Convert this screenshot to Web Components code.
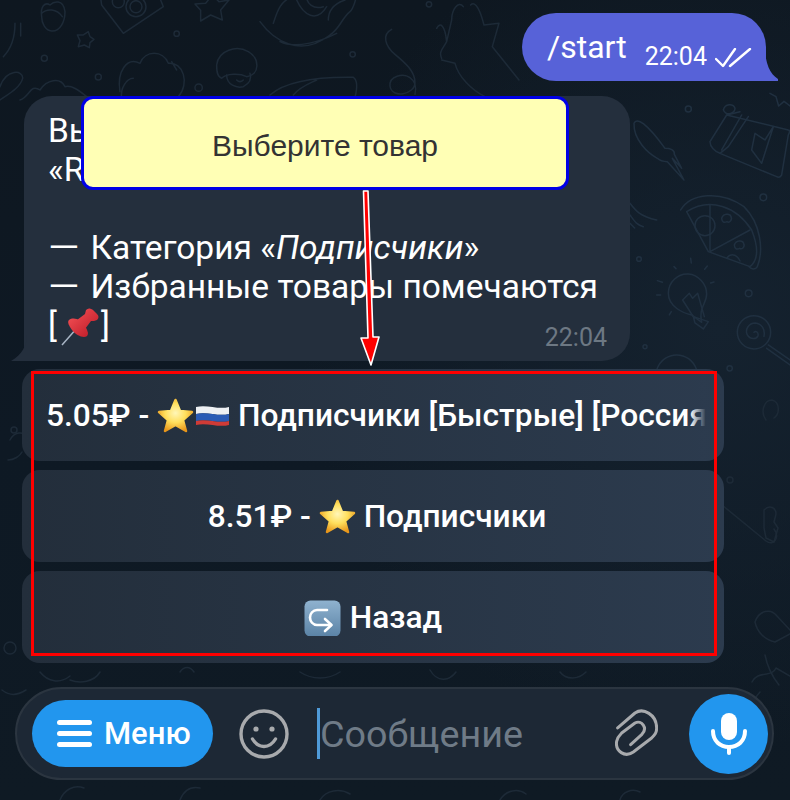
<!DOCTYPE html>
<html>
<head>
<meta charset="utf-8">
<style>
  html, body { margin: 0; padding: 0; background: #0e1822; }
  body { width: 790px; height: 800px; overflow: hidden; font-family: Roboto, "Liberation Sans", sans-serif; }
</style>
</head>
<body>
<tg-screen>
  <tg-outgoing time="22:04">/start</tg-outgoing>
  <tg-incoming time="22:04">Вы
«R

<span class="dash">—</span> Категория «<em>Подписчики</em>»
<span class="dash">—</span> Избранные товары помечаются
[<tg-emoji name="pin"></tg-emoji>]</tg-incoming>
  <tg-keyboard>
    <tg-key fade>5.05₽ - <tg-emoji name="star"></tg-emoji><tg-emoji name="flag"></tg-emoji> Подписчики [Быстрые] [Россия]</tg-key>
    <tg-key style="padding-left:33px">8.51₽ - <tg-emoji name="star"></tg-emoji> Подписчики</tg-key>
    <tg-key><tg-emoji name="back"></tg-emoji> Назад</tg-key>
  </tg-keyboard>
  <tg-composer></tg-composer>
  <tg-hint slot="overlay">Выберите товар</tg-hint>
</tg-screen>

<script>
class TgScreen extends HTMLElement {
  constructor() {
    super();
    this.attachShadow({ mode: "open" });
    this.shadowRoot.innerHTML = `
      ${this.css()}
      ${this.doodles()}
      <main><slot></slot></main>
      <slot name="overlay"></slot>
    `;
  }

  // wallpaper line art, coordinates taken from 3x crops of the reference
  doodles() {
    return `
      <svg class="wall" width="790" height="800" viewBox="0 0 790 800" fill="none" stroke="#1d2a37" stroke-width="1.5" stroke-linecap="round" stroke-linejoin="round">
        <g transform="translate(0 0) scale(.3333)" stroke-width="4.5">
          <path d="M125 50c-5-30 10-45 25-35 10-10 40-20 45 20 0 30-15 60-40 58-20-2-30-25-30-43z"/>
          <path d="M125 40c15-15 45-15 62 10"/>
          <path d="M305 15L370 100 490 20 470 -30 300 -20z"/>
          <circle cx="408" cy="20" r="30"/><circle cx="408" cy="20" r="18"/><circle cx="355" cy="5" r="18"/>
          <path d="M585 12l32-2 20-25 20 20 30-5-25 30 5 30-35-15-30 18 0-32z"/>
          <path d="M232 105l18 0 15-10 5 15 12 8-12 10-2 15-15-8-18 5 5-18z"/>
          <path d="M10 170C40 140 45 100 45 70M62 70v38"/>
          <path d="M360 275c-10-60 20-105 60-85 15-40 70-40 85 0 45-5 65 60 30 100M400 235c-20 0-40 30-35 60M515 185l15 25"/>
          <path d="M650 195c5-45 60-60 95-40 35 20 35 70-5 75-20-10-60-10-75 5-15-5-15-25-15-40z"/>
          <path d="M680 225c0 30 30 40 50 35 20-10 25-25 20-40M710 240c6 6 14 6 20 0"/>
          <path d="M0 260C20 205 70 210 68 235 60 265 20 285 0 300"/>
          <path d="M60 300c30-10 30-50 60-30 20-30 60-40 75-10 20-5 40 10 65 30"/>
          <circle cx="133" cy="175" r="9"/><circle cx="295" cy="231" r="9"/><circle cx="530" cy="101" r="8"/><circle cx="596" cy="263" r="11"/>
        </g>
        <g transform="translate(260 0) scale(.3333)" stroke-width="4.5">
          <path d="M0 65c40 55 120 110 210 40 30-20 35-50 60-70 10-10 20-40 20-60M40 70c10-30 20-70 60-80M110 0c20 45 60 70 90 20M140-10c0 20 20 40 50 30M205 60c0-30 20-50 50-60M60 125C110 150 190 120 230 100"/>
          <circle cx="278" cy="163" r="8"/><circle cx="507" cy="13" r="8"/>
          <path d="M395 88c-30 15-20 50 10 75 30 25 60 50 60 85 0 35-70 50-75 10-3-30 40-40 60-25 15 10 20 30 15 50"/>
          <path d="M530 85c10-20 25-10 30 40M575 60c0-30 20-60 35-40M632 15c15-15 30 20 40 60l45-5-20 70 80 100M545 175c-10-20 5-30 15-50l15-65M545 180l40 10c10 40 50 80 90 100"/>
          <path d="M30 285C70 250 150 230 280 232c15 10 10 40 5 60M100 285c20-25 50-35 70-45"/>
        </g>
        <g transform="translate(630 90) scale(.3333)" stroke-width="4.5" stroke="#203040">
          <path d="M12 100C20 80 50 100 105 175c15 0 30 5 28 18l22 42-28-30 35 65-50-55c-10 0-20 0-30-10C55 190 10 150 12 100z"/>
          <path d="M240 155L290 75 475 120c5 0 5 5 0 15L455 255c-5 8-10 8-15 5L270 190c-15-5-30-20-30-35z"/>
          <path d="M290 75l40-10M355 80L295 170l-25 20M335 75l-60 105M430 110l-35 110-30-40 10-50 30 20z"/>
          <path d="M280 60c5-20 30-20 35-5 0 15-25 25-35 5z"/>
          <path d="M152 360c30-50 120-60 190-10 50 50 60 130 40 180-5 10-20 8-25 0"/>
          <path d="M170 365L235 485 360 530M170 365C240 320 320 350 365 420 385 470 385 510 360 530"/>
          <path d="M240 345V485L360 420"/>
          <circle cx="225" cy="407" r="30"/>
          <path d="M275 385c5-15 25-15 28-5 5 10-5 20-12 15-10 5-15 0-16-10z"/>
          <path d="M313 465c5-15 25-15 28-5 5 10-5 20-12 15-10 5-15 0-16-10z"/>
          <path d="M290 505c10-15 30-15 40 8"/>
          <path d="M115 610c0-35 30-60 60-58s55 30 55 60c0 30-25 40-15 85l-30-22C160 670 115 650 115 610z"/>
          <path d="M190 680l45 15-15 22-25-18zM158 630l20-20 10 15 15-15 20 70M158 630l35 55"/>
          <path d="M82 572l15 5M80 615h12M118 675l6-10M132 530l6 6M182 505l2 14M232 528l-8 10M252 576l-10 3"/>
          <circle cx="372" cy="727" r="50"/>
          <path d="M372 727c6-6 14 0 12 10-4 12-24 12-32-2-8-16 4-36 24-36 20 2 30 20 26 40"/>
          <path d="M415 765l65 45M410 775l70 50"/>
          <circle cx="175" cy="57" r="9"/><circle cx="400" cy="322" r="10"/><circle cx="356" cy="610" r="10"/><circle cx="27" cy="507" r="7"/><circle cx="45" cy="770" r="6"/><circle cx="299" cy="835" r="8"/>
          <path d="M0 340c15 20 30 40 80 50M0 375c15 20 20 30 40 35M0 400l14 14"/>
          <path d="M80 840c20-60 100-60 120 0"/>
          <path d="M420 10l18 10 8 28 16-14 18 14"/>
        </g>
        <path d="M766 420c-6-8-2-20 6-20 8 2 8 14 2 18"/><circle cx="14" cy="430" r="3"/>
        <path d="M10 440c4-8 14-10 16-2M8 460c6 0 12-4 14-8"/>
        <path d="M722 505l44 36c8 6 14-4 8-12"/><circle cx="730" cy="480" r="3"/>
        <path d="M764 510c6-6 12-2 12 4l-2 8 4 6-4 14-8-4-2-10z"/>
        <path d="M755 622c4-12 16-14 22-6l13 14M755 622c2 10 10 18 20 20l15-8"/>
        <path d="M765 655c2 10 6 20 14 30"/><circle cx="10" cy="648" r="6"/>
        <path d="M760 730c-6-12-12-26 0-38M752 682c6-12 20-4 24-14l14 8"/>
        <path d="M40 672c8 10 20 12 30 4M100 672c-6 10-20 12-30 8M26 690c-10 6-16 6-24 0"/>
        <path d="M180 672c4-6 10-6 14 0M300 672c12 8 28 8 40 0M430 670c8 14 20 10 26 2M560 672c6 8 18 8 26 0"/>
        <path d="M60 800c4-10 14-16 24-12M180 800c4-10 10-14 20-12M320 800c6-10 20-12 30-6M500 800c6-10 18-12 26-6M620 800c2-8 12-12 20-8"/>
      </svg>
    `;
  }

  css() {
    return `
      <style>
        :host {
          display: block;
          position: relative;
          width: 790px;
          height: 800px;
          overflow: hidden;
          color: #fff;
          background:
            radial-gradient(420px 420px at 720px 330px, #15222f 0%, rgba(21, 34, 47, 0) 100%),
            linear-gradient(180deg, #0e1720 0%, #0e1924 55%, #0f1a24 100%);
        }

        .wall {
          position: absolute;
          inset: 0;
        }

        main {
          position: relative;
          display: flex;
          flex-direction: column;
          padding-top: 13px;
        }
      </style>
    `;
  }
}

class TgOutgoing extends HTMLElement {
  constructor() {
    super();
    this.attachShadow({ mode: "open" });
    this.shadowRoot.innerHTML = `
      ${this.css()}
      <div class="bubble">
        <span class="text"><slot></slot></span>
        <span class="time">${this.getAttribute("time")}</span>
        <svg class="ticks" width="37" height="20" viewBox="0 0 37 20" fill="none" stroke="#fff" stroke-width="2.4" stroke-linecap="round" stroke-linejoin="round">
          <path d="M1 11l7 7L20 1"/>
          <path d="M15 18L35 1"/>
        </svg>
        <svg class="tail" width="13" height="34" viewBox="0 0 13 34"><path d="M0 0c0 16 5 27 13 32v2H0z" fill="#5762d8"/></svg>
      </div>
    `;
  }

  css() {
    return `
      <style>
        :host {
          display: flex;
          justify-content: flex-end;
          padding-right: 24px;
        }

        .bubble {
          position: relative;
          display: flex;
          align-items: flex-end;
          height: 68px;
          box-sizing: border-box;
          width: 244px;
          padding: 0 0 9px 25px;
          background: #5762d8;
          border-radius: 34px 34px 0 34px;
        }

        .text {
          font-size: 32px;
          line-height: 38px;
          margin-bottom: 6px;
          margin-right: 18px;
        }

        .time {
          font-size: 25px;
          line-height: 30px;
          margin-right: 8px;
        }

        .ticks {
          margin-bottom: 4px;
        }

        .tail {
          position: absolute;
          right: -12px;
          bottom: 0;
        }
      </style>
    `;
  }
}

class TgIncoming extends HTMLElement {
  constructor() {
    super();
    this.attachShadow({ mode: "open" });
    this.shadowRoot.innerHTML = `
      ${this.css()}
      <div class="bubble">
        <div class="text"><slot></slot></div>
        <span class="time">${this.getAttribute("time")}</span>
        <svg class="tail" width="16" height="26" viewBox="0 0 16 26"><path d="M16 0c0 10-5 20-16 26h16z" fill="#242f3d"/></svg>
      </div>
    `;
  }

  css() {
    return `
      <style>
        :host {
          display: block;
          margin-top: 15px;
          padding-left: 24px;
        }

        .bubble {
          position: relative;
          box-sizing: border-box;
          width: 606px;
          height: 265px;
          padding: 15px 24px 0;
          background: #242f3d;
          border-radius: 28px 28px 28px 0;
        }

        .text {
          font-size: 33.5px;
          line-height: 39px;
          white-space: pre-wrap;
        }

        ::slotted(.dash) {
          display: inline-block;
          transform: scaleX(1.2);
          transform-origin: left;
          margin-right: 8px;
        }

        .time {
          position: absolute;
          right: 23px;
          bottom: 8px;
          font-size: 25px;
          line-height: 30px;
          color: #6d7883;
        }

        .tail {
          position: absolute;
          left: -13px;
          bottom: 0;
        }
      </style>
    `;
  }
}

class TgKeyboard extends HTMLElement {
  constructor() {
    super();
    this.attachShadow({ mode: "open" });
    this.shadowRoot.innerHTML = `
      <style>
        :host {
          display: flex;
          flex-direction: column;
          gap: 9px;
          margin-top: 8px;
          margin-left: 22px;
          width: 702px;
        }
      </style>
      <slot></slot>
    `;
  }
}

class TgKey extends HTMLElement {
  constructor() {
    super();
    this.attachShadow({ mode: "open" });
    this.shadowRoot.innerHTML = `
      ${this.css()}
      <div class="label"><slot></slot></div>
      ${this.hasAttribute("fade") ? '<div class="fade"></div>' : ""}
    `;
  }

  css() {
    return `
      <style>
        :host {
          display: flex;
          position: relative;
          height: 92px;
          align-items: center;
          justify-content: ${this.hasAttribute("fade") ? "flex-start" : "center"};
          padding: 0 ${this.hasAttribute("fade") ? "18px 0 24px" : "25px"};
          box-sizing: border-box;
          overflow: hidden;
          border-radius: 18px;
          background: linear-gradient(90deg, #232e3b 0%, #2c3b4e 100%);
          font-size: 31.7px;
          font-weight: 500;
          white-space: nowrap;
        }

        .label {
          overflow: hidden;
          line-height: 37px;
        }

        .fade {
          position: absolute;
          right: 18px;
          top: 0;
          bottom: 0;
          width: 16px;
          background: linear-gradient(90deg, rgba(44, 59, 78, 0), #2c3b4e);
        }
      </style>
    `;
  }
}

class TgEmoji extends HTMLElement {
  constructor() {
    super();
    this.attachShadow({ mode: "open" });
    this.shadowRoot.innerHTML = `<style>
        :host {
          display: inline-block;
          vertical-align: -7px;
          line-height: 0;
          margin: -6px 0;
          white-space: normal;
        }

        :host([name="pin"]) {
          vertical-align: -9px;
        }
      </style>${this.icon(this.getAttribute("name"))}`;
  }

  icon(name) {
    if (name === "star") {
      return `<svg width="37" height="35" viewBox="0 0 37 35">
        <defs><radialGradient id="s" cx=".5" cy=".42" r=".62"><stop offset="0" stop-color="#fff6b8"/><stop offset=".5" stop-color="#ffdf5c"/><stop offset="1" stop-color="#e8961a"/></radialGradient></defs>
        <path d="M18.5 2L23 13 35 14 26 22 29 33 18.5 27 8 33 11 22 2 14 14 13z" fill="url(#s)" stroke="url(#s)" stroke-width="2.5" stroke-linejoin="round"/>
      </svg>`;
    }
    if (name === "flag") {
      return `<svg width="35" height="24" viewBox="0 0 35 24" style="margin:0 0 5px 1px">
        <path d="M1 3c11-3 22 3 33 0v7c-11 3-22-3-33 0z" fill="#eef0f3"/>
        <path d="M1 10c11-3 22 3 33 0v7c-11 3-22-3-33 0z" fill="#2a5bb5"/>
        <path d="M1 17c11-3 22 3 33 0v4c-11 3-22-3-33 0z" fill="#cf3b36"/>
      </svg>`;
    }
    if (name === "pin") {
      return `<svg width="38" height="38" viewBox="0 0 38 38" style="margin:0 2px 0 4px">
        <defs><linearGradient id="p" x1="0" y1="0" x2="1" y2="1"><stop offset="0" stop-color="#ee4a50"/><stop offset="1" stop-color="#c2202c"/></linearGradient></defs>
        <path d="M1 37l15-17" stroke="#a9b6c6" stroke-width="1.5" fill="none"/>
        <path d="M25 2c2-2 4-2 7 0l4 4c2 2 2 4 0 6l-3 1-3 0-6 8-8-9 8-6z" fill="url(#p)"/>
        <path d="M8 12c3-2 7-2 11 1s7 7 8 12c0 3-2 4-4 4-4 0-9-3-12-7s-5-8-3-10z" fill="url(#p)"/>
      </svg>`;
    }
    return `<svg width="37" height="37" viewBox="0 0 37 37" style="margin-right:1px;vertical-align:-2px">
      <defs><linearGradient id="b" x1="0" y1="0" x2="0" y2="1"><stop offset="0" stop-color="#8fb2cf"/><stop offset="1" stop-color="#5b83a6"/></linearGradient></defs>
      <rect x=".5" y=".5" width="36" height="36" rx="6" fill="url(#b)"/>
      <path d="M23 10H13c-4 0-7 3.5-7 7.5s3 7.5 7 7.5h14" fill="none" stroke="#fff" stroke-width="2.6" stroke-linecap="round"/>
      <path d="M21 19l6.5 6-6.5 6" fill="none" stroke="#fff" stroke-width="2.6" stroke-linecap="round" stroke-linejoin="round"/>
    </svg>`;
  }
}

class TgComposer extends HTMLElement {
  constructor() {
    super();
    this.attachShadow({ mode: "open" });
    this.shadowRoot.innerHTML = `
      ${this.css()}
      <div class="bar">
        <button class="menu">
          <svg width="35" height="27" viewBox="0 0 35 27" fill="#fff"><rect width="35" height="5" rx="2.5"/><rect y="11" width="35" height="5" rx="2.5"/><rect y="22" width="35" height="5" rx="2.5"/></svg>
          Меню
        </button>
        <svg class="smile" width="50" height="50" viewBox="0 0 50 50" fill="none" stroke="#a8aaad" stroke-width="3.4" stroke-linecap="round">
          <circle cx="25" cy="25" r="23"/>
          <circle cx="17" cy="20" r="2.6" fill="#a8aaad" stroke="none"/>
          <circle cx="33" cy="20" r="2.6" fill="#a8aaad" stroke="none"/>
          <path d="M13.5 30c3 5 7 7.5 11.5 7.500s8.5-2.5 11.5-7.5"/>
        </svg>
        <div class="field"><span class="caret"></span>Сообщение</div>
        <svg class="clip" width="43.3" height="48.3" viewBox="45 40 130 145" fill="none" stroke="#a8aaad" stroke-width="9" stroke-linecap="round" stroke-linejoin="round">
          <path d="M53 100L105 55C130 38 170 60 170 100C170 115 165 120 155 130L100 172C75 190 45 170 50 140C52 130 55 125 65 115L105 85C125 75 145 100 125 120L92 150"/>
        </svg>
        <div class="mic">
          <svg width="36" height="42" viewBox="0 0 36 42" fill="none" stroke="#fff" stroke-width="4" stroke-linecap="round">
            <rect x="10" y="0" width="16" height="27" rx="8" fill="#fff" stroke="none"/>
            <path d="M2 18c0 10 7 16 16 16s16-6 16-16"/>
            <path d="M18 34v6"/>
          </svg>
        </div>
      </div>
    `;
  }

  css() {
    return `
      <style>
        :host {
          display: block;
          margin-top: 24px;
          padding: 0 16px 0 15px;
        }

        .bar {
          display: flex;
          align-items: center;
          box-sizing: border-box;
          height: 93px;
          padding: 0 4px 0 15px;
          border: 2px solid #2b3540;
          border-radius: 47px;
          background: #1d2835;
        }

        .menu {
          display: flex;
          align-items: center;
          gap: 12px;
          width: 181px;
          height: 67px;
          box-sizing: border-box;
          padding: 0 0 0 25px;
          border: 0;
          border-radius: 34px;
          background: #2296ee;
          color: #fff;
          font: 500 31px Roboto, "Liberation Sans", sans-serif;
        }

        .smile {
          margin-left: 26px;
        }

        .field {
          display: flex;
          align-items: center;
          flex: 1;
          margin-left: 28px;
          font-size: 37.7px;
          color: #6f7b87;
        }

        .caret {
          width: 3px;
          height: 51px;
          background: #4f9ad8;
        }

        .clip {
          margin: -2px 31px 0 0;
        }

        .mic {
          display: flex;
          align-items: center;
          justify-content: center;
          width: 79px;
          height: 80px;
          border-radius: 50%;
          background: #2296ee;
        }
      </style>
    `;
  }
}

// annotation laid over the screenshot: tooltip, arrow and red frame
class TgHint extends HTMLElement {
  constructor() {
    super();
    this.attachShadow({ mode: "open" });
    this.shadowRoot.innerHTML = `
      ${this.css()}
      <div class="frame"></div>
      <svg class="arrow" width="40" height="185" viewBox="0 0 40 185">
        <path d="M14.5 2l4.5 147-7 0 10 27 8-28-6 0-5-146z" fill="#f00" stroke="#fff" stroke-width="1.6" stroke-linejoin="round"/>
      </svg>
      <div class="tip"><slot></slot></div>
    `;
  }

  css() {
    return `
      <style>
        :host {
          display: block;
        }

        .tip {
          position: absolute;
          left: 81px;
          top: 96px;
          width: 488px;
          height: 94px;
          box-sizing: border-box;
          display: flex;
          align-items: center;
          justify-content: center;
          padding-top: 6px;
          background: #ffffb5;
          border: 3px solid #0000e6;
          border-radius: 12px;
          color: #333;
          font-family: "Liberation Sans", Arial, sans-serif;
          font-size: 30px;
        }

        .arrow {
          position: absolute;
          left: 349px;
          top: 189px;
        }

        .frame {
          position: absolute;
          left: 31px;
          top: 371px;
          width: 686px;
          height: 285px;
          box-sizing: border-box;
          border: 3px solid #f00;
        }
      </style>
    `;
  }
}

customElements.define("tg-screen", TgScreen);
customElements.define("tg-outgoing", TgOutgoing);
customElements.define("tg-incoming", TgIncoming);
customElements.define("tg-keyboard", TgKeyboard);
customElements.define("tg-key", TgKey);
customElements.define("tg-emoji", TgEmoji);
customElements.define("tg-composer", TgComposer);
customElements.define("tg-hint", TgHint);
</script>
</body>
</html>
